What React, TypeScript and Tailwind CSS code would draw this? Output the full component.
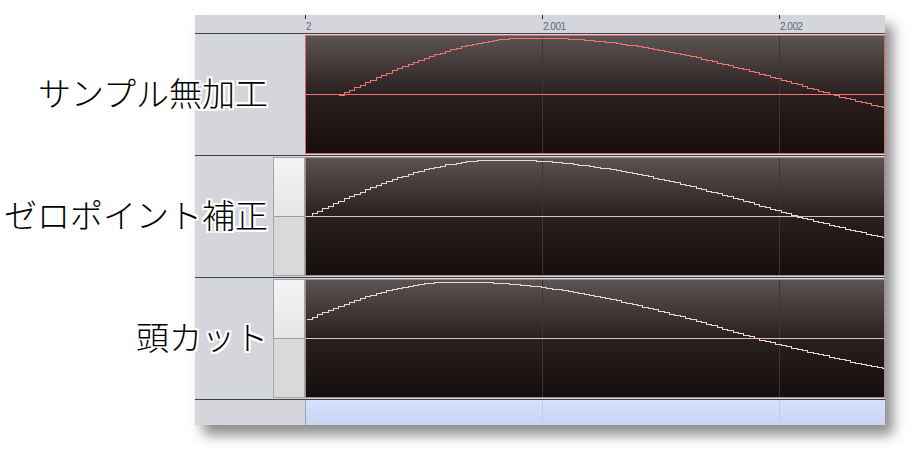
const SAMPLE = 235 / 44.1
const W = 578
const H = 117
const CY = 58.5
const AMP = 57

function shape(dx: number) {
  if (dx <= 0) return Math.cos((Math.max(dx, -384) / 192) * (Math.PI / 2))
  const c = Math.cos((dx / 300) * (Math.PI / 2))
  return c < 0 ? c * 0.85 : c
}

function stepPath(start: number, peak: number) {
  const pts: [number, number][] = []
  for (let x = start; x < W; x += SAMPLE) {
    pts.push([x, Math.round(CY - AMP * shape(x - peak)) + 0.5])
  }
  let d = `M${pts[0][0].toFixed(2)} ${pts[0][1]}`
  for (let i = 0; i < pts.length; i++) {
    const next = pts[i + 1]
    d += ` H${(next ? next[0] : W).toFixed(2)}`
    if (next) d += ` V${next[1]}`
  }
  return d
}

const tracks = [
  { label: 'サンプル無加工', start: 33, peak: 225, selected: true, button: false },
  { label: 'ゼロポイント補正', start: 1, peak: 191, selected: false, button: true },
  { label: '頭カット', start: 1, peak: 150, selected: false, button: true },
]

const halo =
  '[text-shadow:2px_0_0_#fff,-2px_0_0_#fff,0_2px_0_#fff,0_-2px_0_#fff,2px_2px_0_#fff,-2px_-2px_0_#fff,2px_-2px_0_#fff,-2px_2px_0_#fff,0_0_3px_#fff]'

function Wave({ start, peak, selected }: { start: number; peak: number; selected: boolean }) {
  const line = selected ? '#f07676' : '#f2d6d6'
  const mid = selected ? '#ec7272' : '#dcc4c4'
  return (
    <svg width={W} height={H} viewBox={`0 0 ${W} ${H}`} className="block" shapeRendering="crispEdges">
      <line x1={236.5} y1={0} x2={236.5} y2={H} stroke="#3e3535" />
      <line x1={473.5} y1={0} x2={473.5} y2={H} stroke="#3e3535" />
      <line x1={0} y1={CY} x2={W} y2={CY} stroke={mid} />
      <path d={stepPath(start, peak)} fill="none" stroke={line} strokeWidth={1} />
    </svg>
  )
}

function Track({ t }: { t: (typeof tracks)[number] }) {
  return (
    <div className="flex h-[122px] border-b border-[#39424e]">
      <div className="flex w-[110px] shrink-0 items-center justify-end bg-[#d5d6db]">
        <span
          className={`whitespace-nowrap pb-[4px] font-['Noto_Sans_CJK_JP',sans-serif] text-[33px] font-light leading-none text-black ${halo}`}
        >
          {t.label}
        </span>
        {t.button ? (
          <div className="ml-[5px] flex h-[119px] w-[32px] shrink-0 flex-col border border-[#a3a3a8]">
            <div className="flex-1 bg-linear-to-b from-[#f4f4f4] to-[#e6e6e6]" />
            <div className="h-px bg-[#ab9696]" />
            <div className="flex-1 bg-[#d9d9d9]" />
          </div>
        ) : (
          <div className="w-[37px] shrink-0" />
        )}
      </div>
      <div className="flex flex-1 flex-col justify-center bg-[#d5d6db]">
        <div
          className={`h-[119px] border bg-linear-to-b from-[#5c5452] via-[#2a2020] to-[#160d0d] ${
            t.selected ? 'border-[#dc6666]' : 'border-[#a48c8c]'
          }`}
        >
          <Wave start={t.start} peak={t.peak} selected={t.selected} />
        </div>
      </div>
    </div>
  )
}

export default function App() {
  return (
    <div className="h-[452px] w-[912px] bg-white pl-[195px] pt-[15px] font-['Liberation_Sans',sans-serif]">
      <div className="flex w-[690px] flex-col shadow-[8px_10px_12px_rgba(0,0,0,0.45)]">
        <div className="flex h-[19px] border-b border-[#39424e] bg-[#d5d6db]">
          <div className="w-[110px] shrink-0" />
          {['2', '2.001', '2.002'].map((v, i) => (
            <div key={v} className={`flex flex-col ${i < 2 ? 'w-[237px] shrink-0' : 'flex-1'}`}>
              <div className="h-[4px] w-px bg-[#222]" />
              <span className="pl-[1px] pt-[3px] text-[10px] leading-[10px] tracking-[-0.5px] text-[#5a6884]">
                {v}
              </span>
            </div>
          ))}
        </div>

        {tracks.map((t) => (
          <Track key={t.label} t={t} />
        ))}

        <div className="flex h-[25px]">
          <div className="w-[110px] shrink-0 bg-[#d5d6db]" />
          <div className="flex flex-1 bg-linear-to-b from-[#d7e1fb] to-[#c9d5f5]">
            <div className="w-[237px] shrink-0 border-l border-[#9ea3b2]" />
            <div className="w-[237px] shrink-0 border-l border-[#c0ccee]" />
            <div className="flex-1 border-l border-[#c0ccee]" />
          </div>
        </div>
      </div>
    </div>
  )
}
